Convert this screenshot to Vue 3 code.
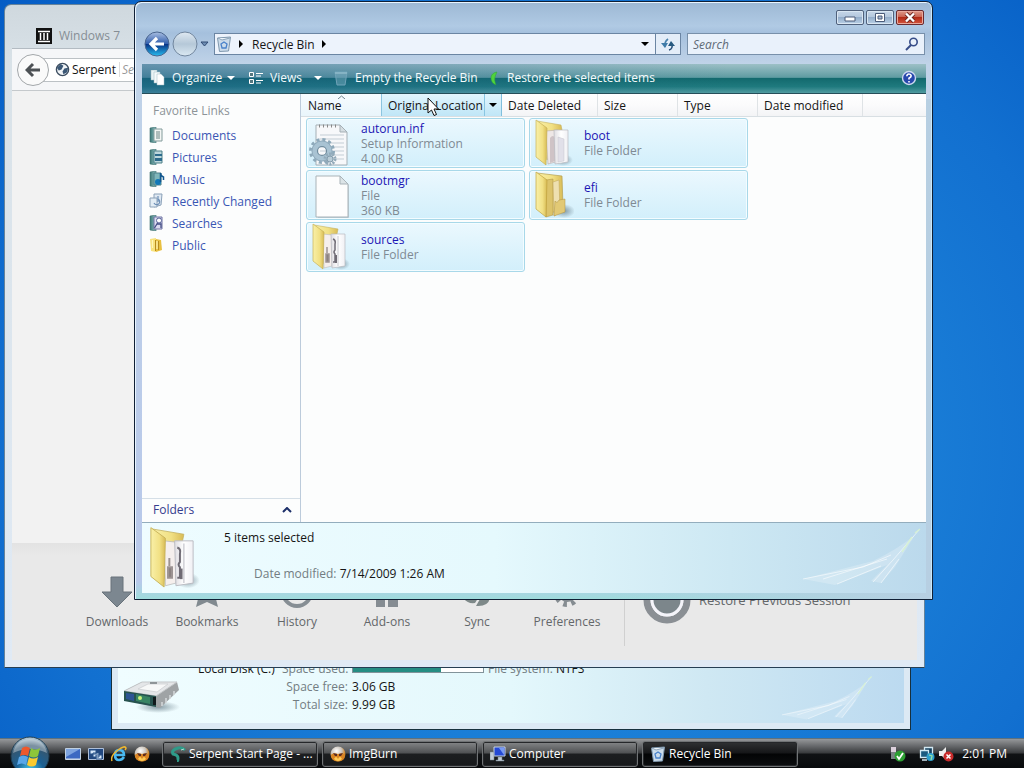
<script setup>
const links = [
  { name: 'Documents', icon: 'docs' },
  { name: 'Pictures', icon: 'pics' },
  { name: 'Music', icon: 'music' },
  { name: 'Recently Changed', icon: 'recent' },
  { name: 'Searches', icon: 'searches' },
  { name: 'Public', icon: 'public' },
]
const columns = [
  { name: 'Name', cls: 'c-name' },
  { name: 'Original Location', cls: 'c-loc' },
  { name: 'Date Deleted', cls: 'c-del' },
  { name: 'Size', cls: 'c-size' },
  { name: 'Type', cls: 'c-size' },
  { name: 'Date modified', cls: 'c-mod' },
]
const files = [
  { name: 'autorun.inf', lines: ['Setup Information', '4.00 KB'], icon: 'inf' },
  { name: 'boot', lines: ['File Folder'], icon: 'folder' },
  { name: 'bootmgr', lines: ['File', '360 KB'], icon: 'file' },
  { name: 'efi', lines: ['File Folder'], icon: 'efi' },
  { name: 'sources', lines: ['File Folder'], icon: 'sources' },
]
const shortcuts = [
  { name: 'Downloads', icon: 'download' },
  { name: 'Bookmarks', icon: 'star' },
  { name: 'History', icon: 'clock' },
  { name: 'Add-ons', icon: 'puzzle' },
  { name: 'Sync', icon: 'sync' },
  { name: 'Preferences', icon: 'gear' },
]
const quick = [
  { name: 'Show desktop', icon: 'desk' },
  { name: 'Switch windows', icon: 'switch' },
  { name: 'Internet Explorer', icon: 'ie' },
  { name: 'ImgBurn', icon: 'burn' },
]
const tasks = [
  { name: 'Serpent Start Page - ...', icon: 'serpent' },
  { name: 'ImgBurn', icon: 'burn' },
  { name: 'Computer', icon: 'computer' },
  { name: 'Recycle Bin', icon: 'bin', active: true },
]
</script>

<template>
  <div class="desktop">
    <svg class="defs" aria-hidden="true">
      <defs>
        <linearGradient id="gy" x1="0" x2="1"><stop offset="0" stop-color="#f9f0a8" /><stop offset=".6" stop-color="#f1e084" /><stop offset="1" stop-color="#d8bb55" /></linearGradient>
        <linearGradient id="gw" x1="0" x2="1"><stop offset="0" stop-color="#dfdde2" /><stop offset=".5" stop-color="#fff" /><stop offset="1" stop-color="#f0f0f4" /></linearGradient>
        <linearGradient id="gt" x1="0" x2="1"><stop offset="0" stop-color="#3d7877" /><stop offset="1" stop-color="#8fc0c2" /></linearGradient>
        <linearGradient id="gback" x1="0" y1="0" x2="0" y2="1"><stop offset="0" stop-color="#a9bfe2" /><stop offset=".48" stop-color="#3560ad" /><stop offset=".5" stop-color="#082f82" /><stop offset="1" stop-color="#27bdf0" /></linearGradient>
        <linearGradient id="gfwd" x1="0" y1="0" x2="0" y2="1"><stop offset="0" stop-color="#dfe9f2" /><stop offset=".5" stop-color="#b5c8d8" /><stop offset="1" stop-color="#dbe9f3" /></linearGradient>
        <radialGradient id="gorb" cx=".5" cy=".9" r=".9"><stop offset="0" stop-color="#48d0f2" /><stop offset=".4" stop-color="#1b6093" /><stop offset=".75" stop-color="#35566f" /><stop offset="1" stop-color="#c3d8e4" /></radialGradient>
        <radialGradient id="gburn" cx=".4" cy=".3" r=".8"><stop offset="0" stop-color="#fff" /><stop offset=".45" stop-color="#c9c2ba" /><stop offset=".7" stop-color="#d48a2a" /><stop offset="1" stop-color="#6e4820" /></radialGradient>
        <radialGradient id="gshadow"><stop offset="0" stop-color="#5d7480" stop-opacity=".7" /><stop offset="1" stop-color="#5d7480" stop-opacity="0" /></radialGradient>
      </defs>
      <symbol id="docs" viewBox="0 0 16 16"><path d="M1 1l6-1v16l-6-1z" fill="url(#gt)" stroke="#3b6d6d" stroke-width=".6" /><path d="M5 2h8v12H5z" fill="#f3f6f4" stroke="#829b9b" /><path d="M7 5h4M7 7h4M7 9h4M7 11h4" stroke="#6b8585" /></symbol>
      <symbol id="pics" viewBox="0 0 16 16"><path d="M1 1l6-1v16l-6-1z" fill="url(#gt)" stroke="#3b6d6d" stroke-width=".6" /><path d="M5 2h8v12H5z" fill="#bcd7dc" stroke="#4f8088" /><path d="M6 5h7v2H6zM6 9h7v3H6z" fill="#2c6b8c" /></symbol>
      <symbol id="music" viewBox="0 0 16 16"><path d="M1 1l6-1v16l-6-1z" fill="url(#gt)" stroke="#3b6d6d" stroke-width=".6" /><path d="M5 2h7v12H5z" fill="#7fb6ba" stroke="#4f8088" /><circle cx="9" cy="11" r="3" fill="#1379b8" /><path d="M11.500 11V2q0 3 3 4v3" fill="none" stroke="#12578f" stroke-width="1.500" /></symbol>
      <symbol id="recent" viewBox="0 0 16 16"><path d="M5 1h8l-1 11-7 2z" fill="#dfe9f3" stroke="#8ba1b8" /><path d="M1 5h7v9H1z" fill="#e3edf5" stroke="#8ba1b8" /><path d="M5 10a3 3 0 1 0 4-4V3v6" fill="none" stroke="#6d8fb6" stroke-width="1.200" /></symbol>
      <symbol id="searches" viewBox="0 0 16 16"><path d="M1 1l6-1v16l-6-1z" fill="url(#gt)" stroke="#3b6d6d" stroke-width=".6" /><path d="M5 2h8v12H5z" fill="#dcdcf0" stroke="#6f72a2" /><circle cx="10" cy="5.500" r="2.500" fill="#fff" stroke="#59649a" /><path d="M8.500 8l-3 5M8 9h4v4" fill="none" stroke="#454f86" stroke-width="1.300" /></symbol>
      <symbol id="public" viewBox="0 0 16 16"><path d="M1 2l6-1v14l-5-1z" fill="#f8e27d" /><path d="M7 2l5 1 1 10-6 2z" fill="#e8c041" /><path d="M6.500 3v11M9.500 4v9" stroke="#b78c1c" /><path d="M3.500 3v8M8 4v8" stroke="#fff6b8" stroke-width="1.200" /></symbol>

      <symbol id="folder" viewBox="0 0 44 50"><ellipse cx="33" cy="42" rx="10" ry="6" fill="url(#gshadow)" /><path d="M7 3l24 4 1 5-15 30z" fill="url(#gy)" stroke="#c4b262" stroke-width=".6" /><path d="M16 13l12-1 1 31-11 3z" fill="#eee7e6" stroke="#b8adab" stroke-width=".6" /><path d="M20 20q3-4 5 0v23l-5 2z" fill="#cfc3c6" /><path d="M24 12h14v32l-13 2z" fill="url(#gw)" stroke="#b9bac0" stroke-width=".7" /><path d="M28 19l6 2v22l-6 1z" fill="#e1e0e9" stroke="#c5c5cc" stroke-width=".5" /><path d="M6 2l11 8-1 37-10-8z" fill="url(#gy)" stroke="#c7b258" stroke-width=".7" /></symbol>
      <symbol id="efi" viewBox="0 0 44 50"><ellipse cx="34" cy="41" rx="11" ry="7" fill="url(#gshadow)" /><path d="M7 3l25 3 1 31-17 9z" fill="url(#gy)" stroke="#b5a053" stroke-width=".7" /><path d="M16 10l7-1v36l-7 2z" fill="#dcc36a" stroke="#a98e42" stroke-width=".5" /><path d="M23 12l6-2 1 32-6 4z" fill="#eee0b0" stroke="#bda25b" stroke-width=".5" /><path d="M25 31q2 3 4-1l6-1v13l-11 4z" fill="#e2c975" stroke="#af9342" stroke-width=".5" /><path d="M6 2l11 8-1 37-10-8z" fill="url(#gy)" stroke="#c1a33d" stroke-width=".7" /></symbol>
      <symbol id="sources" viewBox="0 0 44 50"><ellipse cx="34" cy="42" rx="9" ry="6" fill="url(#gshadow)" /><path d="M7 3l24 4-1 5-13 30z" fill="url(#gy)" stroke="#c4b262" stroke-width=".6" /><path d="M16 12l9 1v31l-8 2z" fill="#f5efed" stroke="#bbb" stroke-width=".6" /><path d="M20 25v6M19 32h3v8h-3z" fill="#8b8180" stroke="#9c9392" stroke-width="1.500" /><path d="M24 12h14v32l-13 2z" fill="url(#gw)" stroke="#b9bac0" stroke-width=".7" /><path d="M31 14v30" stroke="#c8c8cf" /><path d="M26 17q3 1 2 5v6q-2 2 0 4v8h-2" fill="none" stroke="#6f6b74" stroke-width="1.500" /><path d="M29 33v8" stroke="#6f6b74" stroke-width="2" /><path d="M6 2l11 8-1 37-10-8z" fill="url(#gy)" stroke="#c7b258" stroke-width=".7" /></symbol>
      <symbol id="file" viewBox="0 0 44 50"><path d="M11 7h23l8 8v33H11z" fill="#89969d" opacity=".35" /><path d="M9 6h24l8 8v33H9z" fill="#fdfdfd" stroke="#a9b3b8" /><path d="M33 6v8h8z" fill="#dce4e7" stroke="#a9b3b8" /></symbol>
      <symbol id="inf" viewBox="0 0 44 50"><path d="M9 7h24l7 7v33H9z" fill="#f7f8fa" stroke="#a5afb5" /><path d="M33 7v7h7z" fill="#d6dee2" stroke="#a5afb5" /><path d="M12 8h19" stroke="#888" stroke-width="3" stroke-dasharray="1 3" /><path d="M13 17h24M13 21h24M13 25h24M13 29h24M13 33h24M13 37h24M13 41h24" stroke="#c3cdd5" /><circle cx="15" cy="33" r="11" fill="none" stroke="#8ea9ba" stroke-width="4" stroke-dasharray="3 2.760" /><circle cx="15" cy="33" r="7.500" fill="none" stroke="#a9c3d3" stroke-width="6" /><circle cx="15" cy="33" r="10" fill="none" stroke="#7f9bac" stroke-width=".6" /><circle cx="15" cy="33" r="4.500" fill="none" stroke="#6f8b9d" stroke-width="1.200" /><circle cx="23" cy="41" r="5" fill="none" stroke="#93abba" stroke-width="3" stroke-dasharray="2 1.140" /><circle cx="23" cy="41" r="3" fill="#b9ccd7" stroke="#849dad" /></symbol>
      <symbol id="bin" viewBox="0 0 16 16"><path d="M1.500 2l13-1-2 14-9 .5z" fill="#ccdcea" stroke="#7f98ae" /><path d="M2 2l4 2 8-2" fill="#eef5fb" stroke="#8ca4ba" /><path d="M5 8l3-2 3 2-1 4H6z" fill="none" stroke="#4a82ca" stroke-width="1.300" /></symbol>
      <symbol id="emptybin" viewBox="0 0 16 16"><path d="M2 2h12l-2 13H4z" fill="#7fb0c4" fill-opacity=".45" stroke="#6fa3b8" /><path d="M2 3h12" stroke="#a0c6d4" /></symbol>
      <symbol id="flight" viewBox="0 0 120 60"><path d="M0 52L70 34Q95 22 112 8L92 40 78 56 68 54 84 38 32 58z" fill="#fff" fill-opacity=".22" /><path d="M0 52L60 40 88 28M20 52l64-20M34 57l44-18M70 55l20-22L116 3M78 56l18-24" stroke="#fff" stroke-opacity=".55" fill="none" /><path d="M99 25l10-15M112 6l5-4" stroke="#d7f2d2" stroke-opacity=".9" stroke-width="1.500" /></symbol>

      <symbol id="download" viewBox="0 0 40 40"><path d="M14 5h12v15h9L20 35 5 20h9z" fill="#7c8790" stroke="#68737b" /></symbol>
      <symbol id="star" viewBox="0 0 40 40"><path d="M20 3l5 12h12l-9 8 3 12-11-5-11 5 3-12-9-8h12z" fill="#818a90" /></symbol>
      <symbol id="clock" viewBox="0 0 40 40"><circle cx="20" cy="20" r="14" fill="none" stroke="#868e94" stroke-width="4" /><path d="M20 10v11h7" stroke="#868e94" stroke-width="3" fill="none" /></symbol>
      <symbol id="puzzle" viewBox="0 0 40 40"><path d="M9 11h8V5h7v6h7v24H21v-7h-3v7H9z" fill="#858c92" /></symbol>
      <symbol id="sync" viewBox="0 0 40 40"><path d="M7 27l13-12 5 5-7 11q-7 1-11-4M19 34l8-14 6 6q-2 9-14 8z" fill="#7e8989" /></symbol>
      <symbol id="gear" viewBox="0 0 40 40"><circle cx="20" cy="22" r="8" fill="#858c91" /><circle cx="20" cy="22" r="10" fill="none" stroke="#858c91" stroke-width="6" stroke-dasharray="3.500 4.350" /></symbol>

      <symbol id="desk" viewBox="0 0 16 16"><path d="M.5 2.500h15v11H.5z" fill="#3c69c2" stroke="#bfd0e2" /><path d="M1 3h14L1 11z" fill="#7ea4df" /><path d="M1 13h14" stroke="#d2dce8" /></symbol>
      <symbol id="switch" viewBox="0 0 16 16"><path d="M.5 2.500h15v11H.5z" fill="#224880" stroke="#aebfd8" /><path d="M2 4h6v4H2zM5 7h6v4H5zM8 9h6v4H8z" fill="#d6e7fa" stroke="#275187" /></symbol>
      <symbol id="ie" viewBox="0 0 16 16"><path d="M4 9h9q0-5-5-5-4 0-4 5 0 5 4 5 3 0 5-3" fill="none" stroke="#49b8ef" stroke-width="2.600" /><path d="M1 15Q-1 10 7 4q7-5 8-2 0 1-1 2" fill="none" stroke="#efb72f" stroke-width="1.500" /></symbol>
      <symbol id="burn" viewBox="0 0 16 16"><circle cx="8" cy="8" r="7.500" fill="url(#gburn)" /><path d="M1 9q2-3 7-1 5-2 7 1 0 6-7 6.500Q1 15 1 9z" fill="#d98422" /><path d="M4 13q2-4 4 0 2-4 4 0-2 2-4 2t-4-2z" fill="#ffcb55" /><path d="M3 7l4 1v2H5zM13 7L9 8v2h2z" fill="#5a2c22" /></symbol>
      <symbol id="serpent" viewBox="0 0 16 16"><path d="M15 4Q12 1 8 2q-7 2-5 6 5 1 5 4t-1 3" fill="none" stroke="#2f9b89" stroke-width="3" /><path d="M14 3l-3 1" stroke="#b3e1d3" /></symbol>
      <symbol id="computer" viewBox="0 0 16 16"><path d="M4 1h11v9H4z" fill="#2449d5" stroke="#c7d4e3" /><path d="M9 2h5v7z" fill="#799bf2" /><path d="M8 11h4v3h2v1H6v-1h2zM0 6h4v8H0z" fill="#c1cbd6" stroke="#71808c" stroke-width=".5" /></symbol>
    </svg>

    <section class="window computer">
      <div class="disk-pane">
        <svg class="drive" viewBox="0 0 60 36"><ellipse cx="36" cy="29" rx="22" ry="6" fill="url(#gshadow)" /><path d="M2 13L20 4 55 4 57 12 38 30 3 22z" fill="#9fa3a5" /><path d="M2 13L20 4h35L34 18z" fill="#e4e6e8" stroke="#c3c6c8" /><path d="M16 11L26 6h20L35 14z" fill="#f7f8f8" stroke="#c8ccce" stroke-width=".7" /><path d="M28 5h7" stroke="#777d80" stroke-width="1.500" /><path d="M40 24v4M44 20v5M48 17v4M52 13v4" stroke="#d6dadc" stroke-width="1.500" /><path d="M2 13l32 5v11L2 23z" fill="#27534f" /><path d="M4 15l8 1v7l-8-2z" fill="#2e5594" /><path d="M14 16l14 3v7l-14-3z" fill="#388463" /><path d="M31 19h3v8h-3z" fill="#10191b" /><circle cx="18" cy="20" r="2" fill="#c9f27d" /></svg>
        <dl class="disk">
          <dt class="disk-name">Local Disk (C:)</dt>
          <dd class="muted">Space used:</dd>
          <dd class="meter"><i></i></dd>
          <dd class="fs"><span class="muted">File system:</span> NTFS</dd>
          <dt class="muted free">Space free:</dt><dd>3.06 GB</dd>
          <dt class="muted free">Total size:</dt><dd>9.99 GB</dd>
        </dl>
        <svg class="flight"><use href="#flight" /></svg>
      </div>
    </section>

    <section class="window browser">
      <div class="tabs">
        <svg class="fav" viewBox="0 0 16 16"><path d="M0 0h16v16H0z" fill="#111" /><path d="M2 3.500h12M2 13.500h12M4.500 5v7M8 5v7M11.500 5v7" stroke="#fff" stroke-width="1.500" /></svg>
        <span>Windows 7</span>
      </div>
      <div class="urlbar">
        <button class="bback" aria-label="Back"><svg viewBox="0 0 16 16"><path d="M15 8H3M8 2L2 8l6 6" fill="none" stroke="#4d5155" stroke-width="3" /></svg></button>
        <div class="url">
          <svg viewBox="0 0 16 16"><circle cx="8" cy="8" r="6.500" fill="#f2f5f8" stroke="#3c4d60" stroke-width="1.500" /><path d="M2 6l4-4 3 2-2 4-3 1zM10 7l4-1-1 5-4 2-1-3z" fill="#3c5876" /></svg>
          <b>Serpent</b><input type="text" placeholder="Search" aria-label="Address">
        </div>
      </div>
      <div class="page"></div>
      <div class="launcher">
        <button v-for="s in shortcuts" :key="s.name" class="launch"><svg><use :href="'#' + s.icon" /></svg>{{ s.name }}</button>
        <div class="rule"></div>
        <button class="restore"><svg viewBox="0 0 48 48"><circle cx="24" cy="24" r="20" fill="none" stroke="#8a8f94" stroke-width="7" /><circle cx="24" cy="24" r="15" fill="#7c868b" stroke="#f4f4fa" stroke-width="3" /></svg>Restore Previous Session</button>
      </div>
    </section>

    <main class="window explorer">
      <header class="caption">
        <button class="cap" aria-label="Minimize"><svg viewBox="0 0 26 13"><path d="M8 6h10v4H8z" fill="#fff" stroke="#4a5b79" /></svg></button>
        <button class="cap" aria-label="Maximize"><svg viewBox="0 0 26 13"><path d="M8.500 2.500h9v8h-9z" fill="#fff" stroke="#4a5b79" /><path d="M11 5h4v3h-4z" fill="#a7b9d2" stroke="#4a5b79" /></svg></button>
        <button class="cap close" aria-label="Close"><svg viewBox="0 0 26 13"><path d="M9 2.500l8 8m0-8l-8 8" stroke="#6c2822" stroke-width="4" /><path d="M9 2.500l8 8m0-8l-8 8" stroke="#fff" stroke-width="2.400" /></svg></button>
      </header>

      <nav class="navrow">
        <div class="navbtns">
          <button aria-label="Back"><svg viewBox="0 0 26 26"><circle cx="13" cy="13" r="12" fill="url(#gback)" stroke="#4b668f" /><path d="M20 13H8M13 7l-6 6 6 6" fill="none" stroke="#fff" stroke-width="3.200" /></svg></button>
          <button aria-label="Forward"><svg viewBox="0 0 26 26"><circle cx="13" cy="13" r="12" fill="url(#gfwd)" stroke="#71869e" /></svg></button>
          <button class="recent" aria-label="Recent pages"><svg viewBox="0 0 9 6"><path d="M1 1h7L4.500 5z" fill="#6e8eb4" stroke="#304a73" /></svg></button>
        </div>
        <div class="address">
          <svg class="abin"><use href="#bin" /></svg>
          <svg class="arr" viewBox="0 0 4 8"><path d="M0 0l4 4-4 4z" /></svg>
          <span>Recycle Bin</span>
          <svg class="arr" viewBox="0 0 4 8"><path d="M0 0l4 4-4 4z" /></svg>
          <button class="drop" aria-label="Previous locations"><svg viewBox="0 0 8 4"><path d="M0 0h8L4 4z" /></svg></button>
        </div>
        <button class="refresh" aria-label="Refresh"><svg viewBox="0 0 16 16"><path d="M5 11Q4 6 8 3" fill="none" stroke="#4b83ac" stroke-width="1.600" /><path d="M1 7h7l-3 5z" fill="#3f7ba8" /><path d="M9 14q4-1 3-6" fill="none" stroke="#285079" stroke-width="1.600" /><path d="M8 10h7l-4-5z" fill="#285a80" /></svg></button>
        <label class="search"><input type="text" placeholder="Search" aria-label="Search"><svg viewBox="0 0 14 14"><circle cx="8.500" cy="5" r="3.700" fill="none" stroke="#374d89" stroke-width="1.600" /><path d="M6 8l-5 5" stroke="#374d89" stroke-width="2" /></svg></label>
      </nav>

      <div class="toolbar">
        <button class="t-org"><svg class="ti" viewBox="0 0 16 16"><path d="M1 0h6v10H1z" fill="#e9f3f5" stroke="#9eb9c1" stroke-width=".5" /><path d="M4 2h6v11H4z" fill="#f5fafb" stroke="#9eb9c1" stroke-width=".5" /><path d="M7 4h4l3 3v8H7z" fill="#fff" stroke="#9eb9c1" stroke-width=".5" /></svg>Organize<i class="tri"></i></button>
        <button class="t-view"><svg class="ti" viewBox="0 0 16 16"><path d="M1.500 2.500h4v4h-4zM1.500 9.500h4v4h-4z" fill="#55777f" stroke="#fff" /><path d="M8 3.500h7M8 6h5M8 10.500h7M8 13h5" stroke="#fff" /></svg>Views<i class="tri wide"></i></button>
        <button class="t-empty"><svg class="ti"><use href="#emptybin" /></svg>Empty the Recycle Bin</button>
        <button class="t-rest"><svg class="leaf" viewBox="0 0 8 14"><path d="M7 1Q1 2 1 7t5 7Q4 9 5 6t2-5z" fill="#4fd33d" stroke="#2ea636" stroke-width=".5" /></svg>Restore the selected items</button>
        <button class="help" aria-label="Help"><svg viewBox="0 0 16 16"><circle cx="8" cy="8" r="6.500" fill="#2748ad" stroke="#cdd9ef" stroke-width="1.400" /><path d="M5.800 6.200Q6 4 8 4t2.200 1.800Q10.200 7 8 8.300v1.200M8 11v1.400" fill="none" stroke="#fff" stroke-width="1.600" /></svg></button>
      </div>

      <div class="body">
        <aside>
          <h2>Favorite Links</h2>
          <a v-for="l in links" :key="l.name" href="#"><svg><use :href="'#' + l.icon" /></svg>{{ l.name }}</a>
          <button class="folders">Folders<svg viewBox="0 0 10 6"><path d="M1 5l4-4 4 4" fill="none" stroke="#1c2f69" stroke-width="2" /></svg></button>
        </aside>
        <div class="content">
          <div class="cols">
            <button v-for="c in columns" :key="c.name" :class="c.cls">{{ c.name }}
              <svg v-if="c.name === 'Name'" class="sort" viewBox="0 0 7 4"><path d="M0 4l3.500-3L7 4" fill="none" stroke="#70848e" /></svg>
              <span v-if="c.cls === 'c-loc'" class="split"><svg viewBox="0 0 8 4"><path d="M0 0h8L4 4z" /></svg></span>
            </button>
          </div>
          <ul class="tiles">
            <li v-for="f in files" :key="f.name">
              <svg><use :href="'#' + f.icon" /></svg>
              <div><strong>{{ f.name }}</strong><span v-for="t in f.lines" :key="t">{{ t }}</span></div>
            </li>
          </ul>
        </div>
      </div>

      <footer class="details">
        <svg class="dfolder" viewBox="0 0 44 50"><use href="#sources" /></svg>
        <div class="dtext">
          <p class="big">5 items selected</p>
          <p class="mod"><span class="muted">Date modified:</span> 7/14/2009 1:26 AM</p>
        </div>
        <svg class="flight"><use href="#flight" /></svg>
      </footer>
    </main>

    <svg class="cursor" viewBox="0 0 12 19"><path d="M1 1v15l3.500-3L7 18.500l2.500-1L7 12h4.500z" fill="#fff" stroke="#111" /></svg>

    <footer class="taskbar">
      <button class="start" aria-label="Start"><svg viewBox="0 0 40 40"><circle cx="20" cy="20" r="19" fill="url(#gorb)" stroke="#1d3c52" /><path d="M3 17Q6 3 20 3t17 14Q20 9 3 17z" fill="#fff" opacity=".35" /><path d="M12 12q4-3 8 0l-2 8q-4-2-8 0z" fill="#ed592c" /><path d="M21 12q4 3 9 0l-2 8q-4 3-9 0z" fill="#8dc63a" /><path d="M9 21q4-3 9 0l-2 8q-4-3-9 0z" fill="#5aa6e8" /><path d="M19 21q4 3 9 0l-2 8q-4 3-9 0z" fill="#fccb2e" /></svg></button>
      <div class="quick"><button v-for="q in quick" :key="q.name" :aria-label="q.name"><svg><use :href="'#' + q.icon" /></svg></button></div>
      <div class="tasks"><button v-for="t in tasks" :key="t.name" :class="{ active: t.active }"><svg><use :href="'#' + t.icon" /></svg>{{ t.name }}</button></div>
      <div class="tray">
        <svg class="usb" viewBox="0 0 16 16"><path d="M1 1h5v5H1z" fill="#ddd0dc" /><path d="M1 6h6v7H1z" fill="#788183" /><circle cx="10" cy="10" r="5.500" fill="#2c9f32" /><path d="M7 10l2 3 4-6" fill="none" stroke="#fff" stroke-width="1.800" /></svg>
        <svg viewBox="0 0 16 16"><path d="M5.500 1.500h8v7h-8z" fill="#153f5c" stroke="#d3e9f3" stroke-width="1.300" /><path d="M1.500 4.500h8v7h-8z" fill="#1c5b80" stroke="#d3e9f3" stroke-width="1.300" /><path d="M3 14h5" stroke="#d3e9f3" stroke-width="1.500" /><circle cx="11.500" cy="11" r="4" fill="#2d9dcb" /><path d="M10 9l3 1-1 4" fill="none" stroke="#96e1a1" stroke-width="1.300" /></svg>
        <svg viewBox="0 0 16 16"><path d="M1 5h3l4-4v13l-4-4H1z" fill="#eee" /><circle cx="10.500" cy="10.500" r="5" fill="#c92b2b" /><path d="M8.500 8.500l4 4m0-4l-4 4" stroke="#fff" stroke-width="1.500" /></svg>
        <time>2:01 PM</time>
      </div>
    </footer>
  </div>
</template>

<style>
body { margin: 0; }
</style>

<style scoped>
* { box-sizing: border-box; }
.desktop {
  position: relative; min-height: 100vh; overflow: hidden;
  background: radial-gradient(ellipse 75% 90% at 55% 58%, #2390e2 0%, #1b80d8 40%, #1270d0 70%, #0862c8 90%, #045ac4 100%);
  font-family: "Open Sans", "Noto Sans", sans-serif; font-size: 12px; line-height: 15px; color: #151515;
}
.defs { position: absolute; width: 0; height: 0; }
button { font: inherit; color: inherit; border: 0; padding: 0; margin: 0; background: none; display: flex; align-items: center; white-space: nowrap; }
svg { display: block; flex: none; }
p, h2, ul, dl, dd { margin: 0; padding: 0; }
.muted { color: #737d82; }
.window { position: absolute; display: flex; flex-direction: column; border: 1px solid #17303d; }

.computer { left: 111px; right: 113px; top: 500px; bottom: 38px; padding: 0 6px 6px; background: #dce9f4; justify-content: flex-end; }
.disk-pane { position: relative; display: flex; height: 70px; background: linear-gradient(90deg, #f0fdff, #e4f8fc 50%, #cfe8f3 75%, #bcdaf0); }
.drive { width: 60px; height: 38px; margin: 24px 0 0 4px; }
.disk { display: grid; grid-template-columns: 80px 66px 132px auto; column-gap: 4px; margin: 6px 0 0 16px; grid-auto-rows: 18px; align-items: center; height: 54px; white-space: nowrap; }
.disk dt { margin: 0; }
.disk .free { grid-column: 1 / 3; text-align: right; }
.disk .muted { text-align: right; }
.meter { height: 10px; border: 1px solid #82939a; background: #fff; }
.meter i { display: block; width: 68%; height: 8px; background: #258d83; }
.flight { position: absolute; right: 3px; bottom: 6px; width: 120px; height: 60px; }
.computer .flight { right: 24px; bottom: 2px; width: 104px; height: 46px; }

.browser { left: 4px; right: 99px; top: 4px; bottom: 100px; padding: 0 7px 7px; border-radius: 7px 7px 0 0; background: linear-gradient(180deg, #cfd8de 0, #d9e2e8 60px, #e0eaf5 100%); border-color: #66839a; border-bottom-color: #263e52; }
.tabs { height: 44px; display: flex; align-items: center; gap: 7px; padding: 18px 0 0 24px; color: #868e95; border-bottom: 1px solid #b3bbc2; }
.fav { width: 16px; height: 16px; }
.urlbar { height: 42px; display: flex; align-items: center; background: #f5f6f8; border-bottom: 1px solid #c5c9cc; padding-left: 5px; }
.bback { width: 32px; height: 32px; border: 1px solid #a3a7aa; border-radius: 50%; background: #fafafa; justify-content: center; z-index: 1; }
.bback svg { width: 16px; height: 16px; }
.url { flex: 1; height: 24px; display: flex; align-items: center; gap: 2px; margin-left: -6px; padding-left: 11px; background: #fff; border: 1px solid #bcc1c5; }
.url svg { width: 15px; height: 15px; }
.url b { font-weight: 400; padding-right: 3px; border-right: 1px solid #ddd; }
.url input { flex: 1; min-width: 0; border: 0; padding: 0; outline: 0; background: none; font: inherit; font-style: italic; }
.url input::placeholder { color: #999; opacity: 1; }
.page { flex: 1; background: #f2f2f2; }
.launcher { height: 117px; background: linear-gradient(#e3e3e3, #e9e9e9 12px); display: flex; align-items: flex-start; padding: 29px 0 0 60px; color: #636769; }
.launch { width: 90px; flex-direction: column; gap: 2px; }
.launch svg { width: 40px; height: 40px; }
.rule { width: 1px; height: 74px; background: #d0d0d0; margin: 0 18px 0 12px; }
.restore { gap: 8px; font-size: 13px; margin-top: 4px; }
.restore svg { width: 48px; height: 48px; }

.explorer { left: 134px; right: 91px; top: 1px; bottom: 168px; padding: 0 6px 6px 7px; border-radius: 7px 7px 0 0; border-color: #101f35; background: linear-gradient(90deg, #b9c6ec00 60%, #b7cfe2 100%) bottom / 100% 500px no-repeat, linear-gradient(180deg, #9db8d4 0, #b0cae4 24px, #a5c0dd 31px, #c0d3e8 62px, #b8c8ea 97%, #9fdcdc 100%); box-shadow: inset 1px 1px #e9f5ff, inset -1px 0 #c9e8fa; }
.caption { display: flex; justify-content: flex-end; gap: 2px; height: 31px; padding: 8px 2px 0 0; }
.cap { width: 28px; height: 15px; border: 1px solid #50617c; border-radius: 2px; background: linear-gradient(#c6d6e8, #b3c7dd 48%, #94aecb 50%, #b9cfe5); box-shadow: inset 0 0 0 1px #d9e6f2; }
.cap svg { width: 26px; height: 13px; }
.close { border-color: #6b2b2f; background: linear-gradient(#dd9a8a, #c9604e 48%, #b22b17 50%, #d4563f); box-shadow: inset 0 0 0 1px #e9a99c; }
.navrow { display: flex; align-items: center; height: 22px; }
.navbtns { display: flex; align-items: center; width: 72px; gap: 2px; padding-left: 2px; }
.navbtns svg { width: 26px; height: 26px; }
.navbtns .recent svg { width: 9px; height: 6px; }
.address { flex: 1; display: flex; align-items: center; height: 22px; background: #edf3fc; border: 1px solid #6b85a3; padding-left: 1px; }
.abin { width: 16px; height: 16px; }
.address span { margin: 0 7px 0 9px; }
.arr { width: 4px; height: 8px; }
.abin + .arr { margin-left: 7px; }
.drop { margin-left: auto; padding: 0 6px; height: 20px; }
.drop svg { width: 8px; height: 4px; }
.refresh { width: 25px; height: 22px; border: 1px solid #6b85a3; border-left: 0; background: #e4edf8; justify-content: center; }
.refresh svg { width: 16px; height: 16px; }
.search { display: flex; align-items: center; width: 238px; height: 22px; margin: 0 1px 0 6px; padding: 0 5px; border: 1px solid #7890aa; background: #e9f1fb; }
.search input { flex: 1; min-width: 0; border: 0; outline: 0; padding: 0; background: none; font: inherit; font-style: italic; }
.search input::placeholder { color: #5f6a76; opacity: 1; }
.search svg { width: 14px; height: 14px; }

.toolbar { display: flex; align-items: center; height: 30px; margin-top: 9px; padding: 0 0 2px 8px; color: #f5fbfc; text-shadow: 0 1px 2px #12404d; border-bottom: 1px solid #264e59; background: linear-gradient(90deg, #1e5a9070, #14508400 75%), linear-gradient(#9dc0c6, #5f9ca2 46%, #136a6e 50%, #1f7a7e 78%, #519ba0); }
.toolbar button { height: 28px; }
.ti { width: 16px; height: 16px; margin-right: 6px; }
.t-org { width: 98px; }
.t-view { width: 85px; }
.t-empty { width: 157px; }
.tri { width: 0; height: 0; border: 4px solid transparent; border-top-color: #fff; border-bottom: 0; margin-left: 5px; }
.wide { margin-left: 12px; }
.leaf { width: 8px; height: 14px; margin-right: 9px; }
.help { margin-left: auto; margin-right: 9px; }
.help svg { width: 16px; height: 16px; }

.body { flex: 1; display: flex; background: #fcfdfd; min-height: 0; }
aside { width: 159px; display: flex; flex-direction: column; border-right: 1px solid #bccbdb; padding-top: 9px; }
h2 { font-size: 12px; font-weight: 400; color: #8d9498; margin: 0 0 5px 11px; line-height: 16px; }
aside a { display: flex; align-items: center; height: 22px; gap: 7px; padding-left: 7px; color: #3a56b4; text-decoration: none; }
aside a svg { width: 16px; height: 16px; }
.folders { margin-top: auto; height: 24px; justify-content: space-between; padding: 0 8px 2px 11px; border-top: 1px solid #d5dfe7; color: #363c8d; }
.folders svg { width: 10px; height: 6px; }
.content { flex: 1; min-width: 0; }
.cols { display: flex; height: 23px; background: linear-gradient(#fff, #fbfbfc 50%, #f3f4f6); border-bottom: 1px solid #d8dfe3; }
.cols button { position: relative; padding-left: 6px; border-right: 1px solid #dfe3e6; }
.cols .c-name { width: 81px; padding-left: 7px; background: linear-gradient(#f7fcff, #e9f5fb); border-right-color: #8cc5e0; }
.cols .c-loc { width: 120px; background: linear-gradient(#e2f5fd, #bfe6f7); border-right-color: #80bfdd; }
.c-del { width: 96px; }
.c-size { width: 80px; }
.c-mod { width: 105px; }
.sort { position: absolute; left: 37px; top: 1px; width: 7px; height: 4px; }
.split { margin-left: auto; width: 17px; height: 22px; display: flex; align-items: center; justify-content: center; border-left: 1px solid #8ac6e2; }
.split svg { width: 8px; height: 4px; }
.tiles { list-style: none; display: grid; grid-template-columns: repeat(auto-fill, 219px); gap: 2px 4px; padding: 1px 0 0 5px; }
.tiles li { display: flex; align-items: center; height: 50px; gap: 10px; border: 1px solid #a8d8e9; border-radius: 3px; background: linear-gradient(#ebf8fe, #d2effb); box-shadow: inset 0 0 0 1px #f3fcff; }
.tiles svg { width: 44px; height: 50px; }
.tiles span, .tiles strong { display: block; font-weight: 400; color: #7f8a93; }
.tiles strong { color: #1c15b4; }

.details { position: relative; display: flex; height: 71px; border-top: 1px solid #93adbd; background: linear-gradient(90deg, #eefcff, #e5f9fd 45%, #cde8f3 75%, #bbd9ec); }
.dfolder { width: 60px; height: 66px; margin: 2px 22px 0 0; }
.dtext { padding-top: 7px; }
.big { line-height: 16px; }
.mod { margin: 20px 0 0 30px; line-height: 16px; }

.cursor { position: absolute; left: 427px; top: 97px; width: 12px; height: 19px; }

.taskbar { position: absolute; left: 0; right: 0; bottom: 0; height: 30px; display: flex; align-items: center; color: #fff; border-top: 1px solid #60727d; background: linear-gradient(#96989a 0, #65676a 25%, #393b3d 48%, #101214 52%, #080a0c); }
.start { width: 40px; height: 29px; margin-left: 10px; align-items: flex-end; align-self: flex-start; }
.start svg { width: 40px; height: 40px; margin-bottom: -8px; }
.quick { display: flex; gap: 7px; width: 97px; margin: 0 0 0 15px; }
.quick svg { width: 16px; height: 16px; }
.tasks { display: flex; gap: 4px; flex: 0 1 640px; min-width: 0; }
.tasks button { flex: 1; max-width: 156px; height: 26px; gap: 3px; padding-left: 7px; border: 1px solid #707375; border-radius: 3px; background: linear-gradient(#858789, #4f5153 46%, #1c1e20 50%, #17191b); box-shadow: inset 0 0 0 1px #25272a; }
.tasks .active { background: linear-gradient(#303234, #151618 46%, #030405 50%, #0c0e10); }
.tasks svg { width: 16px; height: 16px; }
.tray { margin-left: auto; display: flex; align-items: center; gap: 3px; padding-right: 17px; }
.tray svg { width: 16px; height: 16px; }
.tray .usb { margin-right: 10px; }
time { margin-left: 5px; }
</style>
